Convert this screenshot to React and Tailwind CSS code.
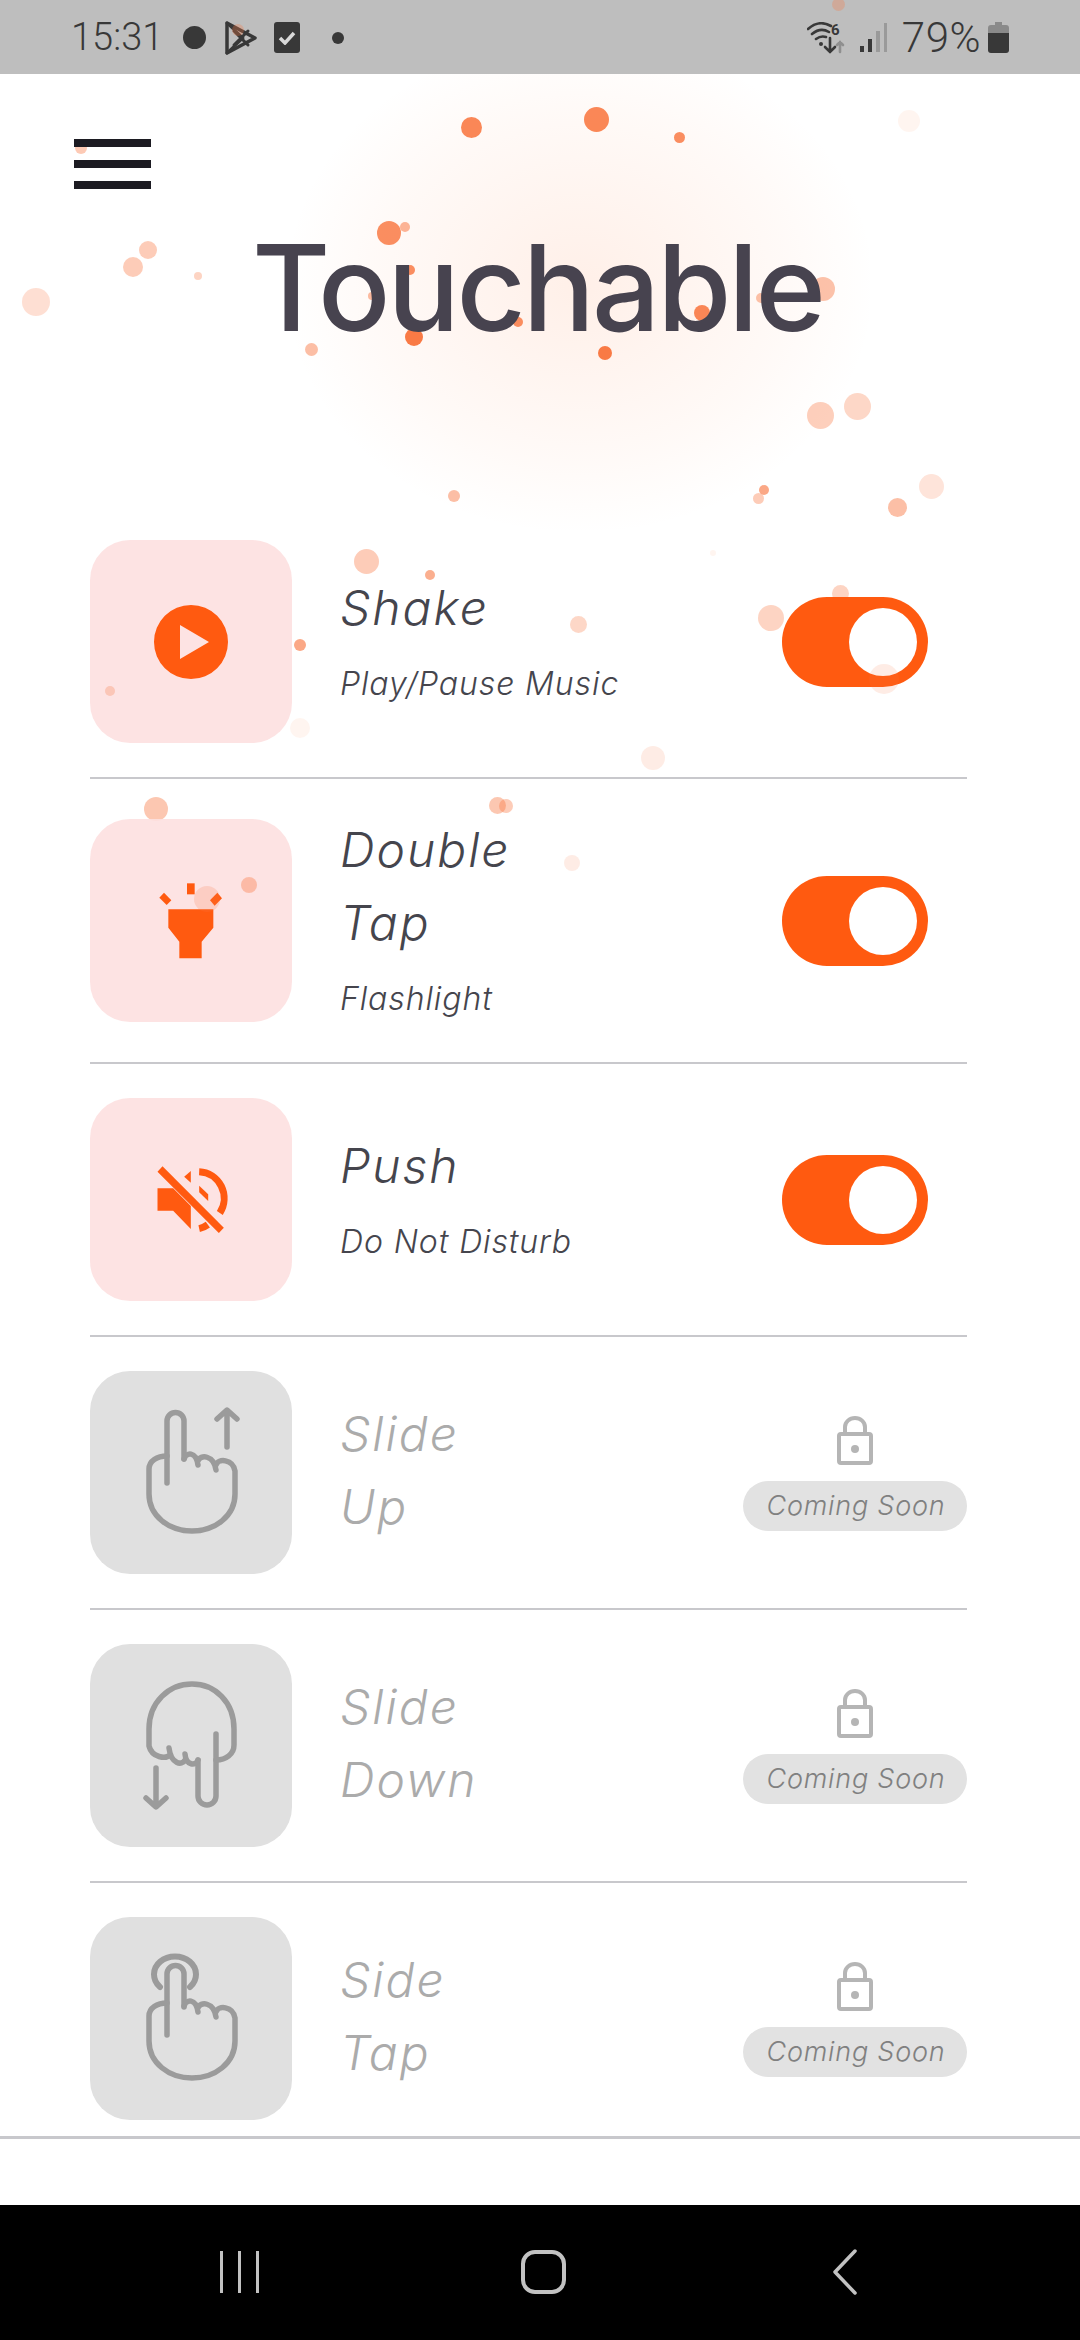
import React from 'react';

const backDots = [
  [471, 127, 21, 0.9], [596, 119, 25, 0.9], [679, 137, 11, 0.85], [909, 121, 22, 0.08], [81, 148, 12, 0.4],
  [389, 233, 24, 0.85], [405, 227, 10, 0.55], [148, 250, 18, 0.38], [133, 267, 20, 0.38], [198, 276, 8, 0.32],
  [36, 302, 28, 0.24], [410, 270, 10, 0.85], [372, 296, 8, 0.5], [823, 289, 24, 0.45], [761, 298, 10, 0.45],
  [702, 313, 16, 0.9], [518, 322, 10, 0.85], [414, 337, 18, 1], [311, 349, 13, 0.48], [605, 353, 14, 1],
  [820, 415, 27, 0.36], [857, 406, 27, 0.3], [931, 486, 25, 0.2], [897, 507, 19, 0.48], [764, 490, 10, 0.65],
  [758, 498, 11, 0.38], [454, 496, 12, 0.48], [366, 561, 25, 0.38], [430, 575, 10, 0.6], [713, 553, 6, 0.08],
  [578, 624, 17, 0.3], [300, 645, 12, 0.65], [840, 593, 17, 0.32], [771, 618, 26, 0.32], [300, 728, 20, 0.08],
  [653, 758, 24, 0.14], [156, 809, 24, 0.42], [497, 805, 17, 0.42], [506, 806, 14, 0.38], [572, 863, 16, 0.14],
];

const frontDots = [
  [110, 691, 10, 0.28], [884, 679, 30, 0.14], [249, 885, 16, 0.38], [207, 899, 26, 0.2],
  [838, 4, 13, 0.3], [238, 30, 12, 0.3],
];

function Dots({ items }) {
  return items.map(([x, y, d, o], i) => (
    <span
      key={i}
      className="absolute rounded-full bg-[#f97a45]"
      style={{ left: x - d / 2, top: y - d / 2, width: d, height: d, opacity: o }}
    />
  ));
}

function PlayIcon() {
  return (
    <svg width="76" height="76" viewBox="0 0 76 76">
      <path fill="#ff5a10" fillRule="evenodd" d="M38 1a37 37 0 1 0 0 74a37 37 0 1 0 0-74zM27 21l29 17l-29 17z" />
    </svg>
  );
}

function FlashIcon() {
  return (
    <svg width="70" height="80" viewBox="200 180 210 240" fill="#ff5a10">
      <polygon points="237,265 372,265 372,320 337,362 337,412 270,412 270,362 237,320" />
      <rect x="293" y="187" width="23" height="33" />
      <polygon points="224,215 246,238 232,252 210,230" />
      <polygon points="384,215 398,232 376,254 362,238" />
    </svg>
  );
}

function MuteIcon() {
  return (
    <svg width="77" height="70" viewBox="190 1030 230 210" fill="#ff5a10">
      <polygon points="203,1100 250,1100 303,1153 303,1222 250,1167 203,1167" />
      <polygon points="303,1048 303,1083 283,1065" />
      <polygon points="328,1092 355,1118 355,1138 328,1112" />
      <path d="M328 1050 A78 80 0 0 1 390 1174" fill="none" stroke="#ff5a10" strokeWidth="21" />
      <path d="M328 1221 Q342 1218 354 1209" fill="none" stroke="#ff5a10" strokeWidth="21" />
      <polygon points="218,1034 402,1218 387,1234 203,1050" />
    </svg>
  );
}

const handPalm = 'M94 88C96 81 106 80 108 94M108 90C110 83 124 84 126 99M126 94C128 87 143 88 145 100V123C145 145 125 160 102 160C79 160 59 145 59 123V98C59 90 67 85 77 85';

function HandIcon({ kind }) {
  return (
    <svg width="202" height="203" viewBox="0 0 202 203" fill="none" stroke="#9b9b9b" strokeWidth="5.5" strokeLinecap="round" strokeLinejoin="round">
      {kind === 'up' && (
        <>
          <path d="M77 112V50a8.5 8.5 0 0 1 17 0V88" />
          <path d={handPalm} />
          <path d="M137 76V40M127 48L137 39L147 48" />
        </>
      )}
      {kind === 'down' && (
        <>
          <path d="M126 90V152a9 9 0 0 1-18 0V116" />
          <path d="M108 116C106 122 96 122 95 110M95 116C92 122 81 120 79 104M80 111C76 115 62 114 59 102V85C59 58 79 40 102 40C125 40 144 58 144 85V101C144 110 136 116 126 116" />
          <path d="M66 124V162M56 154L66 163L76 154" />
        </>
      )}
      {kind === 'tap' && (
        <>
          <path d="M77 118V57a8.5 8.5 0 0 1 17 0V90" />
          <path d={handPalm} transform="translate(0 1)" />
          <path d="M70 70A21 18 0 1 1 100 70" strokeWidth="6" />
        </>
      )}
    </svg>
  );
}

function LockIcon() {
  return (
    <svg width="38" height="50" viewBox="0 0 38 50" fill="none" stroke="#b5b5b5" strokeWidth="4">
      <rect x="3" y="18" width="32" height="29" rx="2" />
      <path d="M9 18V11a10 9 0 0 1 20 0V18" />
      <circle cx="19" cy="33" r="4" fill="#b5b5b5" stroke="none" />
    </svg>
  );
}

function Toggle() {
  return (
    <div className="w-[146px] h-[90px] rounded-full bg-[#ff5a10] flex items-center justify-end pr-[11px]">
      <div className="w-[68px] h-[68px] rounded-full bg-white" />
    </div>
  );
}

function Row({ title, sub, icon, soon, last }) {
  return (
    <div className={`flex items-center pt-[34px] pb-[34px] ${last ? '' : 'border-b-2 border-[#c8c8cc]'}`}>
      <div className={`w-[202px] h-[203px] shrink-0 rounded-[40px] flex items-center justify-center ${soon ? 'bg-[#e0e0e0]' : 'bg-[#fde0e0]/90'}`}>
        {icon}
      </div>
      <div className={`flex-1 pl-[48px] font-['Inter',sans-serif] italic font-light ${soon ? 'pb-[5px]' : ''}`}>
        {title.map((t) => (
          <p key={t} className={`text-[48px] tracking-[2px] leading-[73px] ${soon ? 'text-[#ababab]' : 'text-[#45454d]'}`}>{t}</p>
        ))}
        {sub && <p className="mt-[11px] text-[32px] tracking-[0.9px] leading-[58px] text-[#45454d]">{sub}</p>}
      </div>
      <div className="w-[224px] shrink-0 flex flex-col items-center">
        {soon ? (
          <>
            <div className="mt-[2px] flex"><LockIcon /></div>
            <div className="mt-[15px] w-full h-[50px] rounded-full bg-[#e2e2e2] pl-[2px] flex items-center justify-center font-['Inter',sans-serif] italic font-light text-[27px] tracking-[0.8px] text-[#808080]">
              Coming Soon
            </div>
          </>
        ) : (
          <Toggle />
        )}
      </div>
    </div>
  );
}

function StatusBar() {
  return (
    <div className="relative h-[74px] bg-[#bebebe] flex items-center justify-between pl-[71px] pr-[71px] pt-[1px] font-['Roboto',sans-serif] font-light text-[38px] text-[#383838]">
      <div className="flex items-center">
        <span>15:31</span>
        <span className="ml-[20px] w-[23px] h-[23px] rounded-full bg-[#383838]" />
        <svg className="ml-[18px]" width="34" height="36" viewBox="0 0 34 36" fill="none" stroke="#383838" strokeWidth="3.5" strokeLinejoin="round" strokeLinecap="round">
          <path d="M3 3L31 18L3 33Z" />
          <path d="M3 3L19 18L3 33M10 25L24 11M10 11L24 25" strokeWidth="3" />
        </svg>
        <span className="ml-[16px] w-[26px] h-[31px] rounded-[3px] bg-[#383838] flex items-center justify-center">
          <svg width="18" height="14" viewBox="0 0 18 14" fill="none" stroke="#d8d8d8" strokeWidth="3.5"><path d="M2 7L7 12L16 2" /></svg>
        </span>
        <span className="ml-[32px] w-[12px] h-[12px] rounded-full bg-[#383838]" />
      </div>
      <div className="flex items-center">
        <svg width="40" height="32" viewBox="0 0 40 32" fill="none" stroke="#383838" strokeWidth="2.6" strokeLinecap="round">
          <path d="M1 7C9 0 17 0 24 4M5 12C11 7 17 7 22 10M9 17C13 14 16 14 19 15" />
          <circle cx="14" cy="22" r="2" fill="#383838" stroke="none" />
          <text x="24" y="13" fontSize="15" fontWeight="700" fill="#383838" stroke="none" fontFamily="Roboto, sans-serif">6</text>
          <path d="M23 16V30M18 25L23 30L28 25" />
          <path d="M33 30V20M30 23L33 20L36 23" stroke="#8f8f8f" />
        </svg>
        <svg className="ml-[13px]" width="28" height="30" viewBox="0 0 28 30">
          <rect x="0" y="23" width="4" height="6" fill="#383838" />
          <rect x="8" y="16" width="4" height="13" fill="#383838" />
          <rect x="16" y="8" width="4" height="21" fill="#9a9a9a" />
          <rect x="24" y="0" width="3" height="29" fill="#9a9a9a" />
        </svg>
        <span className="ml-[14px] text-[42px] tracking-[0.5px]">79%</span>
        <svg className="ml-[7px]" width="21" height="31" viewBox="0 0 21 31">
          <path d="M7 0H14V3H18Q21 3 21 6V11H0V6Q0 3 3 3H7Z" fill="#8a8a8a" />
          <path d="M0 11H21V28Q21 31 18 31H3Q0 31 0 28Z" fill="#383838" />
        </svg>
      </div>
    </div>
  );
}

function NavBar() {
  return (
    <div className="h-[135px] bg-black flex items-center justify-between pl-[220px] pr-[223px] pb-[1px]">
      <div className="flex gap-[15px]">
        <span className="w-[3px] h-[42px] bg-[#c2c2c2]" />
        <span className="w-[3px] h-[42px] bg-[#c2c2c2]" />
        <span className="w-[3px] h-[42px] bg-[#c2c2c2]" />
      </div>
      <div className="-ml-[6px] w-[45px] h-[44px] rounded-[14px] border-[4px] border-[#c2c2c2]" />
      <svg width="24" height="46" viewBox="0 0 24 46" fill="none" stroke="#c2c2c2" strokeWidth="3.5" strokeLinecap="round" strokeLinejoin="round">
        <path d="M22 2L2 23L22 44" />
      </svg>
    </div>
  );
}

export default function App() {
  return (
    <div className="relative w-[1080px] h-[2340px] overflow-hidden bg-white flex flex-col">
      <div className="absolute left-[290px] top-[40px] w-[580px] h-[490px] bg-[radial-gradient(ellipse_at_center,rgba(255,150,100,0.15),rgba(255,150,100,0.05)_50%,transparent_72%)]" />
      <Dots items={backDots} />

      <div className="relative z-10 flex flex-col flex-1">
        <StatusBar />
        <main className="flex-1 flex flex-col">
          <div className="h-[432px]">
            <div className="ml-[74px] mt-[65px] w-[77px] flex flex-col gap-[13px]">
              <span className="h-[8px] bg-[#1c1b22]" />
              <span className="h-[8px] bg-[#1c1b22]" />
              <span className="h-[8px] bg-[#1c1b22]" />
            </div>
            <h1 className="mt-[34px] pr-[5px] text-center font-['Inter',sans-serif] font-medium text-[120px] tracking-[-3px] leading-[130px] text-[#47434f]">
              Touchable
            </h1>
          </div>
          <div className="pl-[90px] pr-[113px]">
            <Row title={['Shake']} sub="Play/Pause Music" icon={<PlayIcon />} />
            <Row title={['Double', 'Tap']} sub="Flashlight" icon={<FlashIcon />} />
            <Row title={['Push']} sub="Do Not Disturb" icon={<MuteIcon />} />
            <Row soon title={['Slide', 'Up']} icon={<HandIcon kind="up" />} />
            <Row soon title={['Slide', 'Down']} icon={<HandIcon kind="down" />} />
            <Row soon last title={['Side', 'Tap']} icon={<HandIcon kind="tap" />} />
          </div>
          <div className="mt-[-18px] border-t-[3px] border-[#c8c8cc]" />
        </main>
        <NavBar />
      </div>

      <div className="absolute inset-0 z-20 pointer-events-none">
        <Dots items={frontDots} />
      </div>
    </div>
  );
}
